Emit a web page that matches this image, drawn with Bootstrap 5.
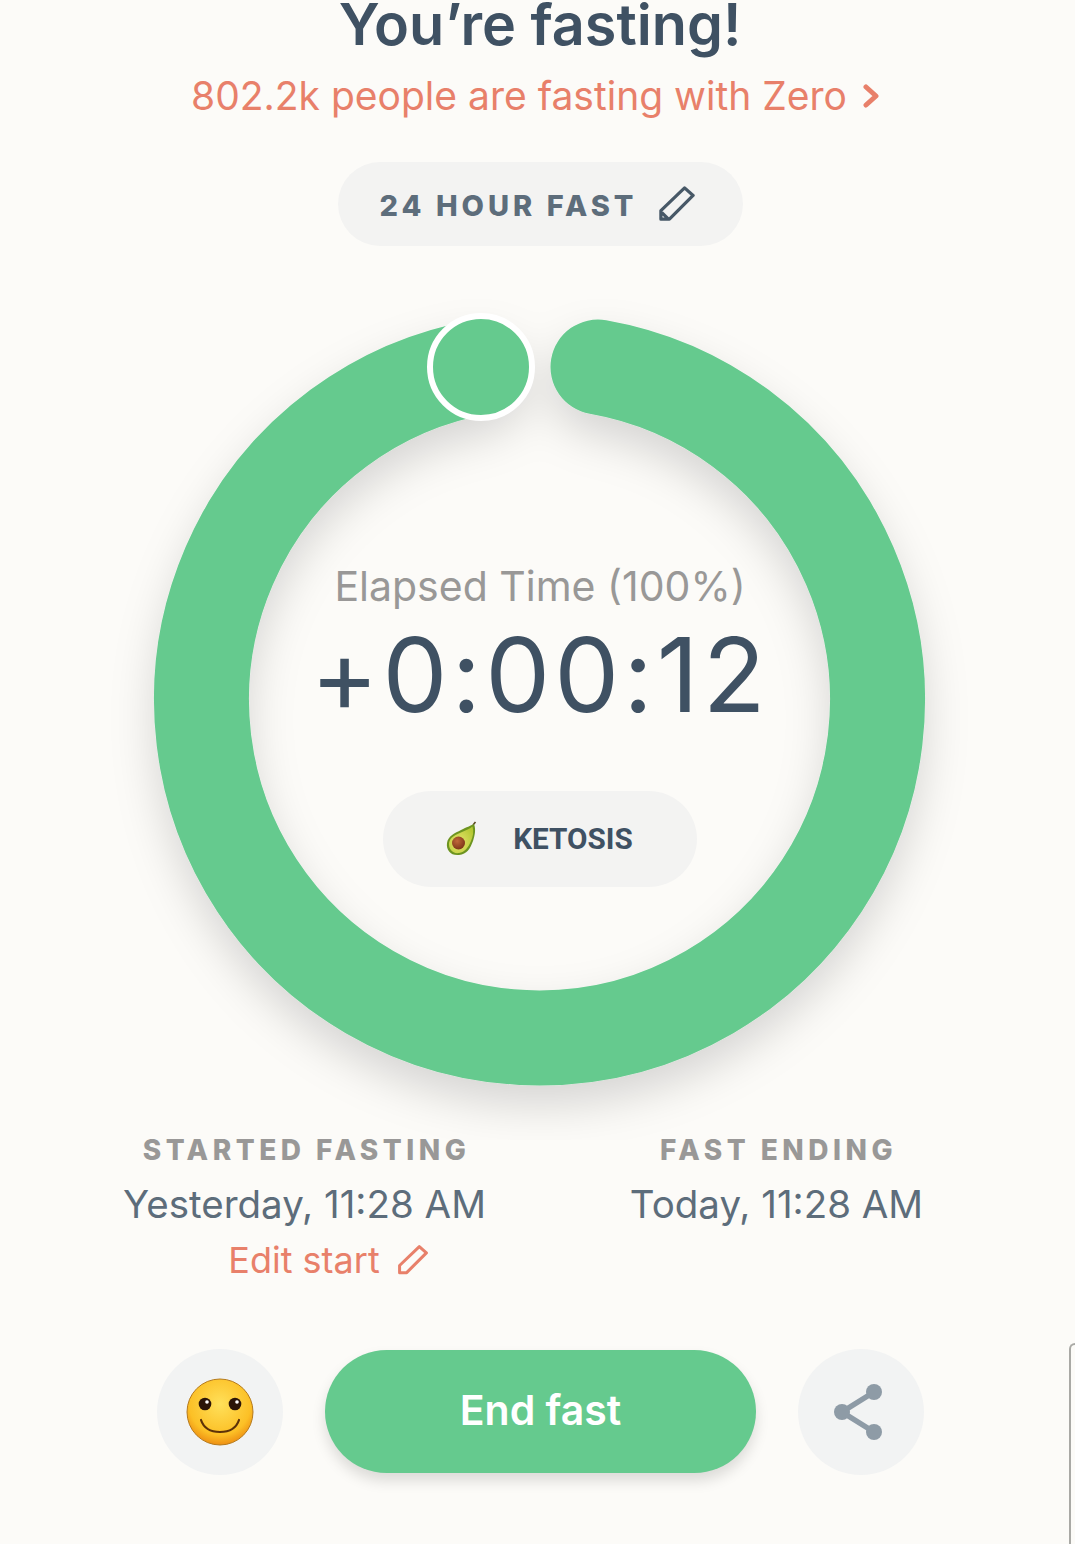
<!DOCTYPE html>
<html lang="en">
<head>
  <meta charset="UTF-8" />
  <meta name="viewport" content="width=device-width, initial-scale=1.0"/>
  <title>Zero</title>
  <link href="https://cdn.jsdelivr.net/npm/bootstrap@5.3.1/dist/css/bootstrap.min.css" rel="stylesheet">
  <style>
    html, body { height: 100%; }
    body {
      background-color: #fcfbf8;
      font-family: "Inter", "Liberation Sans", sans-serif;
      overflow: hidden;
      position: relative;
    }
    .top-block { padding-left: 5px; }
    .fast-title {
      font-size: 57.5px;
      font-weight: 600;
      line-height: 56px;
      color: #3f5163;
      margin: -4px 0 0;
    }
    .fast-sub {
      font-size: 39px;
      line-height: 50px;
      color: #e8806a;
      margin-top: 19px;
      padding-right: 10px;
      gap: 16px;
    }
    .plan-pill {
      width: 405px;
      height: 84px;
      margin: 41px auto 0;
      padding-right: 5px;
      background: #f3f3f2;
      border-radius: 42px;
      gap: 22px;
      font-size: 29px;
      font-weight: 800;
      letter-spacing: 4px;
      color: #5d6d7b;
    }
    .plan-name { padding-top: 3px; }
    .ring-stage {
      display: grid;
      height: 860px;
      margin-top: 34px;
    }
    .ring-stage > * { grid-area: 1 / 1; }
    .ring-art { width: 1075px; height: 860px; }
    .ring-body { padding: 281px 0 0 5px; }
    .elapsed-label {
      font-size: 41px;
      line-height: 50px;
      color: #999897;
    }
    .elapsed-time {
      font-size: 103px;
      line-height: 120px;
      letter-spacing: 4px;
      color: #3f5163;
      margin-top: 4px;
    }
    .stage-pill {
      width: 314px;
      height: 96px;
      margin-top: 56px;
      padding-right: 3px;
      background: #f3f3f2;
      border-radius: 48px;
      gap: 33px;
      font-family: "Roboto", sans-serif;
      font-size: 29.7px;
      font-weight: 700;
      color: #3f5163;
    }
    .time-cols { gap: 72px; margin-top: -7px; padding-left: 6px; }
    .time-col { width: 400px; }
    .time-head {
      font-size: 28px;
      line-height: 34px;
      font-weight: 800;
      letter-spacing: 4.5px;
      padding-left: 4px;
      color: #999897;
    }
    .time-val {
      font-size: 38.5px;
      line-height: 48px;
      color: #5d6d7b;
      margin-top: 13px;
    }
    .time-edit {
      font-size: 36px;
      line-height: 44px;
      color: #e8806a;
      margin-top: 10px;
      padding-left: 47px;
      gap: 18px;
    }
    .action-row { gap: 42px; position: absolute; left: 157px; top: 1349px; }
    .round-act {
      width: 126px;
      height: 126px;
      border-radius: 50%;
      background: #f2f3f3;
    }
    .end-btn {
      width: 431px;
      height: 123px;
      margin-bottom: 2px;
      padding-bottom: 2px;
      border-radius: 62px;
      border: 0;
      background: #65ca8e;
      color: #fff;
      font-size: 41px;
      font-weight: 600;
      box-shadow: 0 8px 14px rgba(0, 0, 0, .13);
    }
    /* corner of the next sheet peeking in at the right edge */
    .next-sheet {
      position: absolute;
      left: 1069px;
      top: 1343px;
      width: 6px;
      height: 201px;
      border-left: 2px solid #a9a9a5;
      border-top: 2px solid #a9a9a5;
      border-top-left-radius: 6px;
    }
  </style>
</head>
<body>
  <div class="top-block">
    <h1 class="fast-title text-center">You’re fasting!</h1>
    <div class="fast-sub d-flex justify-content-center align-items-center">
      <span>802.2k people are fasting with Zero</span>
      <svg width="16" height="24" viewBox="0 0 16 24"><path d="M3 3l10 9-10 9" fill="none" stroke="#e8806a" stroke-width="5" stroke-linecap="round" stroke-linejoin="round"/></svg>
    </div>

    <div class="plan-pill d-flex justify-content-center align-items-center">
      <span class="plan-name">24 HOUR FAST</span>
      <svg width="36" height="36" viewBox="0 0 38 38"><path d="M2 35V26L27 2l9 8-25 25zM3 28l7 7" fill="none" stroke="#475867" stroke-width="3.4" stroke-linejoin="round"/></svg>
    </div>
  </div>

  <div class="ring-stage">
    <svg class="ring-art" viewBox="0 280 1075 860">
      <defs>
        <filter id="ringShadow" x="-20%" y="-20%" width="140%" height="140%">
          <feDropShadow dx="0" dy="20" stdDeviation="22" flood-color="#000" flood-opacity=".15"/>
        </filter>
      </defs>
      <path d="M598 367A338 338 0 1 1 481 367" fill="none" stroke="#65ca8e" stroke-width="95" stroke-linecap="round" filter="url(#ringShadow)"/>
      <circle cx="481" cy="367" r="51" fill="#65ca8e" stroke="#fff" stroke-width="6"/>
    </svg>
    <div class="ring-body d-flex flex-column align-items-center text-center">
      <div class="elapsed-label">Elapsed Time (100%)</div>
      <div class="elapsed-time">+0:00:12</div>
      <div class="stage-pill d-flex justify-content-center align-items-center">
        <svg width="36" height="36" viewBox="-2 0 36 36">
          <defs>
            <radialGradient id="avoFlesh" cx=".4" cy=".6" r=".7"><stop offset="0" stop-color="#e6e46c"/><stop offset="1" stop-color="#b4c832"/></radialGradient>
            <radialGradient id="avoPit" cx=".4" cy=".35" r=".7"><stop offset="0" stop-color="#c0683a"/><stop offset="1" stop-color="#7a3317"/></radialGradient>
          </defs>
          <path d="M27 4l2.500-3" stroke="#5a4a20" stroke-width="1.600" fill="none"/>
          <path d="M28 3c2 5 1 11-1 17-3 8-6 13-14 14C5 35 0 29 1 22 2 15 9 12 15 9c6-3 9-4 13-6z" fill="#6d9420"/>
          <path d="M26.500 5.500c1.500 5 .5 10-1.500 14.500-3 7-6 11-12 12C6.500 33 2.500 28 3 22 4 16 10 13.500 16 11c5-2.200 8-3 10.500-5.500z" fill="url(#avoFlesh)"/>
          <ellipse cx="12.500" cy="22" rx="6.500" ry="6.500" fill="url(#avoPit)"/>
        </svg>
        <span>KETOSIS</span>
      </div>
    </div>
  </div>

  <div class="time-cols d-flex justify-content-center text-center">
    <div class="time-col">
      <div class="time-head">STARTED FASTING</div>
      <div class="time-val">Yesterday, 11:28 AM</div>
      <div class="time-edit d-flex justify-content-center align-items-center">
        <span>Edit start</span>
        <svg width="30" height="30" viewBox="0 0 38 38"><path d="M2 35V26L27 2l9 8-25 25z" fill="none" stroke="#e8806a" stroke-width="3.800" stroke-linejoin="round"/></svg>
      </div>
    </div>
    <div class="time-col">
      <div class="time-head">FAST ENDING</div>
      <div class="time-val">Today, 11:28 AM</div>
    </div>
  </div>

  <div class="action-row d-flex align-items-center">
    <div class="round-act d-flex justify-content-center align-items-center">
      <svg width="70" height="70" viewBox="0 0 70 70">
        <defs>
          <radialGradient id="faceFill" cx=".5" cy=".38" r=".62"><stop offset="0" stop-color="#ffe05a"/><stop offset=".75" stop-color="#fcc026"/><stop offset="1" stop-color="#ee8f12"/></radialGradient>
        </defs>
        <circle cx="35" cy="35" r="33" fill="url(#faceFill)" stroke="#b57a1c" stroke-width="1"/>
        <circle cx="20" cy="27" r="6.300" fill="#2b1508"/>
        <circle cx="50" cy="27" r="6.300" fill="#2b1508"/>
        <circle cx="22" cy="25" r="1.800" fill="#fff"/>
        <circle cx="52" cy="25" r="1.800" fill="#fff"/>
        <path d="M16 43c3 9 11 12 19 12s16-3 19-12" fill="none" stroke="#5d3208" stroke-width="2.200" stroke-linecap="round"/>
      </svg>
    </div>
    <button class="end-btn" type="button">End fast</button>
    <div class="round-act d-flex justify-content-center align-items-center">
      <svg width="56" height="58" viewBox="0 0 56 58">
        <path d="M41 9L9 29l32 20" fill="none" stroke="#8e9ba6" stroke-width="5.500"/>
        <circle cx="41" cy="9" r="8" fill="#8e9ba6"/>
        <circle cx="9" cy="29" r="8" fill="#8e9ba6"/>
        <circle cx="41" cy="49" r="8" fill="#8e9ba6"/>
      </svg>
    </div>
  </div>

  <div class="next-sheet"></div>

  <script src="https://cdn.jsdelivr.net/npm/bootstrap@5.3.1/dist/js/bootstrap.bundle.min.js"></script>
</body>
</html>
